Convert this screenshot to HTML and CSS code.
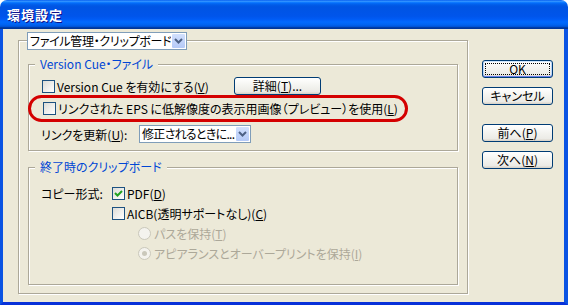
FILE: index.html
```html
<!DOCTYPE html>
<html>
<head>
    <title>環境設定</title>
    <link rel="stylesheet" href="styles.css">
</head>
<body>
    <div class="window">
        <div class="titlebar">環境設定</div>

        <div class="client">
            <div class="panel">
                <!-- page selector sits in the frame line -->
                <div class="combo combo-page">
                    <span class="combo-text">ファイル管理・クリップボード</span>
                    <span class="combo-btn"><svg width="9" height="6" viewBox="0 0 9 6"><polyline points="1,1 4.5,4.5 8,1" fill="none" stroke="#4d6185" stroke-width="2"/></svg></span>
                </div>

                <div class="group group-files">
                    <div class="group-title">Version Cue・ファイル</div>
                    <div class="row row-first">
                        <label class="check check-vc"><span class="box"></span>Version Cue を有効にする(<u>V</u>)</label>
                        <button class="btn btn-detail">詳細(<u>T</u>)...</button>
                    </div>
                    <div class="row highlight">
                        <label class="check"><span class="box"></span>リンクされた EPS に低解像度の表示用画像（プレビュー）を使用(<u>L</u>)</label>
                    </div>
                    <div class="row row-link">
                        <span class="label label-link">リンクを更新(<u>U</u>):</span>
                        <div class="combo combo-link">
                            <span class="combo-text">修正されるときに...</span>
                            <span class="combo-btn"><svg width="9" height="6" viewBox="0 0 9 6"><polyline points="1,1 4.5,4.5 8,1" fill="none" stroke="#4d6185" stroke-width="2"/></svg></span>
                        </div>
                    </div>
                </div>

                <div class="group group-clip">
                    <div class="group-title">終了時のクリップボード</div>
                    <div class="row row-pdf">
                        <span class="label label-copy">コピー形式:</span>
                        <label class="check"><span class="box checked"><svg width="11" height="11" viewBox="0 0 11 11"><polyline points="2,5 4.5,7.5 9,3" fill="none" stroke="#21a121" stroke-width="2"/></svg></span>PDF(<u>D</u>)</label>
                    </div>
                    <div class="row row-sub">
                        <label class="check"><span class="box"></span>AICB(透明サポートなし)(<u>C</u>)</label>
                    </div>
                    <div class="row row-radio">
                        <label class="radio disabled"><span class="dot"></span>パスを保持(<u>T</u>)</label>
                    </div>
                    <div class="row row-radio">
                        <label class="radio disabled"><span class="dot selected"></span>アピアランスとオーバープリントを保持(<u>I</u>)</label>
                    </div>
                </div>
            </div>

            <div class="buttons">
                <button class="btn btn-side btn-default">OK</button>
                <button class="btn btn-side">キャンセル</button>
                <button class="btn btn-side btn-gap">前へ(<u>P</u>)</button>
                <button class="btn btn-side">次へ(<u>N</u>)</button>
            </div>
        </div>
    </div>
</body>
</html>
```

FILE: styles.css
```css
html, body {
    margin: 0;
    padding: 0;
    background: #fff;
}

body {
    font-family: "Noto Sans CJK JP", "Noto Sans", sans-serif;
    font-size: 12px;
    font-feature-settings: "palt";
    color: #000;
}

.window {
    width: 568px;
    height: 305px;
    box-sizing: border-box;
    display: flex;
    flex-direction: column;
}

.titlebar {
    height: 29px;
    flex: none;
    box-sizing: border-box;
    padding: 0 0 0 7px;
    line-height: 30px;
    font-size: 13px;
    font-weight: bold;
    letter-spacing: 1px;
    color: #fff;
    text-shadow: 1px 1px #0f1089;
    border-radius: 7px 7px 0 0;
    background: linear-gradient(to bottom, #0058ee 0%, #3593ff 4%, #288eff 6%, #127dff 8%, #036ffc 10%, #0262ee 14%, #0057e5 20%, #0054e3 24%, #0055eb 56%, #005bf5 66%, #026afe 76%, #0062ef 86%, #0052d6 92%, #0040ab 94%, #003092 100%);
}

.client {
    flex: 1;
    display: flex;
    background: #ece9d8;
    border-left: 3px solid #0a53e3;
    border-right: 4px solid #0a53e3;
    border-bottom: 3px solid #0831d9;
    padding: 11px 0 0 15px;
}

/* etched frames */
.panel, .group {
    border: 1px solid #aca899;
    box-shadow: 1px 1px 0 #fff, inset 1px 1px 0 #fff;
}

.panel {
    width: 450px;
    height: 254px;
    box-sizing: border-box;
    display: flex;
    flex-direction: column;
}

.group {
    margin: 0 9px;
    padding: 0 12px;
}

.group-title {
    width: fit-content;
    margin: -8px 0 0 -6px;
    padding: 0 5px;
    line-height: 14px;
    color: #0046d5;
    background: #ece9d8;
}

.group-files {
    margin-top: 14px;
    height: 87px;
    box-sizing: border-box;
}

.group-clip {
    margin-top: 16px;
    margin-bottom: 8px;
    flex: 1;
}

.row {
    display: flex;
    align-items: center;
    height: 18px;
}

.row-first {
    margin-top: 6px;
}

.highlight {
    height: 27px;
    box-sizing: border-box;
    width: 380px;
    margin-left: -13px;
    padding-left: 11px;
    border: 3px solid #d40000;
    border-radius: 14px;
}

.row-link {
    margin-top: 3px;
}

.row-pdf {
    margin-top: 9px;
    height: 20px;
}

.row-sub {
    height: 20px;
    padding-left: 71px;
}

.row-radio {
    height: 20px;
    padding-left: 97px;
}

.label-link {
    width: 98px;
}

.label-copy {
    width: 71px;
}

.check, .radio {
    display: flex;
    align-items: center;
    white-space: nowrap;
}

.check-vc {
    width: 193px;
}

.box {
    width: 11px;
    height: 11px;
    margin: 0 2px 0 1px;
    border: 1px solid #1c5180;
    background: linear-gradient(135deg, #dcdcd7 0%, #fff 100%);
    display: flex;
    flex: none;
}

.row-sub .box, .row-pdf .box {
    margin-left: 0;
}

.dot {
    width: 11px;
    height: 11px;
    margin-right: 3px;
    border: 1px solid #cac8bb;
    border-radius: 50%;
    background: #f4f3ee;
    display: flex;
    align-items: center;
    justify-content: center;
    flex: none;
}

.dot.selected::after {
    content: "";
    width: 5px;
    height: 5px;
    border-radius: 50%;
    background: #cac8bb;
}

.disabled {
    color: #aca899;
}

.combo {
    display: flex;
    height: 18px;
    box-sizing: border-box;
    border: 1px solid #7f9db9;
    background: #fff;
}

.combo-text {
    flex: 1;
    overflow: hidden;
    white-space: nowrap;
    line-height: 16px;
    padding-left: 2px;
    letter-spacing: -0.3px;
}

.combo-btn {
    width: 15px;
    flex: none;
    box-sizing: border-box;
    border: 1px solid #fff;
    border-radius: 2px;
    background: linear-gradient(to bottom, #d2e0fd, #b4c9f7);
    display: flex;
    align-items: center;
    justify-content: center;
}

.combo-page {
    width: 160px;
    margin: -9px 0 0 8px;
}

.combo-link {
    width: 112px;
}

.combo-link .combo-text {
    letter-spacing: -0.7px;
}

.btn {
    font-family: inherit;
    font-size: 12px;
    font-feature-settings: "palt";
    height: 18px;
    padding: 0;
    border: 1px solid #003c74;
    border-radius: 3px;
    background: linear-gradient(to bottom, #fff 0%, #f3f3ef 50%, #ecebe6 85%, #d6d0c5 100%);
    color: #000;
    line-height: 16px;
}

.btn-detail {
    width: 87px;
}

.buttons {
    display: flex;
    flex-direction: column;
    margin-left: 14px;
    padding-top: 20px;
}

.btn-side {
    width: 71px;
    margin-bottom: 9px;
}

.btn-gap {
    margin-top: 10px;
}

.btn-default {
    box-shadow: inset 0 1px 0 #cee7ff, inset 0 -1px 0 #6982ee, inset 1px 0 0 #b8d4fa, inset -1px 0 0 #b8d4fa;
    outline: 1px dotted #000;
    outline-offset: -4px;
}
```
